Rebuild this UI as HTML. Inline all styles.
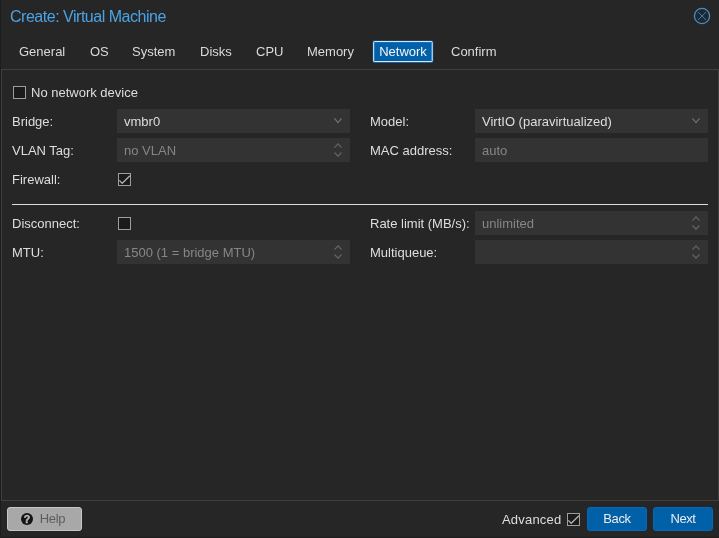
<!DOCTYPE html>
<html><head><meta charset="utf-8"><title>Create: Virtual Machine</title>
<style>
*{box-sizing:border-box;margin:0;padding:0}
html,body{width:719px;height:538px;overflow:hidden;background:#262626}
body{font-family:"Liberation Sans",Arial,Helvetica,sans-serif;font-size:13px;color:#dedede;position:relative}
.edgeL{position:absolute;left:0;top:0;width:1px;height:538px;background:#1c1c1c}
.edgeB{position:absolute;left:0;top:536px;width:719px;height:2px;background:linear-gradient(#252525,#1c1c1c)}
.title{position:absolute;left:10px;top:6px;transform:translateY(0.6px);font-size:16px;letter-spacing:-0.48px;color:#4ca3e4;line-height:20px;white-space:nowrap}
.close{position:absolute;left:693px;top:7px;width:18px;height:18px}
.tab{position:absolute;top:42px;height:22px;line-height:20px;font-size:13px;color:#dadada;white-space:nowrap}
.tab.act{top:41px;text-align:center;line-height:21px;color:#f6f6f6}
.panel{position:absolute;left:1px;top:69px;width:718px;height:432px;border:1px solid #3f3f3f;background:#262626}
.lbl{position:absolute;font-size:13px;line-height:16px;color:#dedede;white-space:nowrap}
.fld{position:absolute;height:24px;background:#333333;font-size:13px;line-height:26px;padding-left:7px;color:#dedede;white-space:nowrap;overflow:hidden}
.fld.dis{color:#868686}
.cb{position:absolute;width:13px;height:13px}
.hr{position:absolute;left:12px;top:204px;width:696px;height:1px;background:#dcdcdc}
.btn{position:absolute;top:507px;height:24px;border-radius:3px;font-size:13px;line-height:22px;text-align:center;letter-spacing:-0.4px;color:#ececec;background:#0060a8;border:1px solid #0668ba}
.help{background:#a8a8a8;color:#5e5e5e;border:1px solid #c6c6c6}
svg{position:absolute;overflow:visible}
.layer{position:absolute;left:0;top:0;width:719px;height:538px;will-change:transform;transform:translateZ(0)}
</style></head><body>
<div class="edgeL"></div><div class="edgeB"></div>
<div class="layer">
<div class="title">Create: Virtual Machine</div>
<svg class="close" viewBox="0 0 18 18"><circle cx="9" cy="9" r="7.6" fill="none" stroke="#3d8fd0" stroke-width="1.3"/><path d="M5 5L13 13M13 5L5 13" stroke="#2380d0" stroke-width="1" fill="none"/></svg>

<div class="tab" style="left:19px">General</div>
<div class="tab" style="left:90px">OS</div>
<div class="tab" style="left:132px">System</div>
<div class="tab" style="left:200px">Disks</div>
<div class="tab" style="left:256px">CPU</div>
<div class="tab" style="left:307px">Memory</div>
<svg style="left:370px;top:38px;width:66px;height:28px" viewBox="0 0 66 28"><rect x="2.6" y="2.5" width="60.7" height="22.2" rx="1" fill="#0a5ea6"/><rect x="3.7" y="3.6" width="58.5" height="20" rx=".6" fill="#0060aa" stroke="#eef4fa" stroke-width="1"/></svg>
<div class="tab act" style="left:373px;width:60px">Network</div>
<div class="tab" style="left:451px">Confirm</div>

<div class="panel"></div>

<svg class="cb" style="left:13px;top:86px" viewBox="0 0 13 13"><rect x=".5" y=".5" width="12" height="12" fill="#1b1b1b" stroke="#9e9e9e"/></svg>
<div class="lbl" style="left:31px;top:85px">No network device</div>

<div class="lbl" style="left:12px;top:114px">Bridge:</div>
<div class="fld" style="left:117px;top:109px;width:233px">vmbr0</div>
<svg style="left:334px;top:118px;width:8px;height:6px" viewBox="0 0 8 6"><path d="M.5 .4L4 4.5L7.5 .4" fill="none" stroke="#747474" stroke-width="1.15"/></svg>
<div class="lbl" style="left:12px;top:143px">VLAN Tag:</div>
<div class="fld dis" style="left:117px;top:138px;width:233px">no VLAN</div>
<svg style="left:334px;top:143px;width:8px;height:14px" viewBox="0 0 8 14"><path d="M.5 4.6L4 .9L7.5 4.6M.5 9.5L4 13.2L7.5 9.5" fill="none" stroke="#656565" stroke-width="1.2"/></svg>
<div class="lbl" style="left:12px;top:172px">Firewall:</div>
<svg class="cb" style="left:118px;top:173px" viewBox="0 0 13 13"><rect x=".5" y=".5" width="12" height="12" fill="#1b1b1b" stroke="#9e9e9e"/><path d="M1.3 7.4L4.2 10.3L11.9 2.7" fill="none" stroke="#b2b2b2" stroke-width="1.3"/></svg>

<div class="lbl" style="left:370px;top:114px">Model:</div>
<div class="fld" style="left:475px;top:109px;width:233px">VirtIO (paravirtualized)</div>
<svg style="left:692px;top:118px;width:8px;height:6px" viewBox="0 0 8 6"><path d="M.5 .4L4 4.5L7.5 .4" fill="none" stroke="#747474" stroke-width="1.15"/></svg>
<div class="lbl" style="left:370px;top:143px">MAC address:</div>
<div class="fld dis" style="left:475px;top:138px;width:233px">auto</div>

<div class="hr"></div>

<div class="lbl" style="left:12px;top:216px">Disconnect:</div>
<svg class="cb" style="left:118px;top:217px" viewBox="0 0 13 13"><rect x=".5" y=".5" width="12" height="12" fill="#1b1b1b" stroke="#9e9e9e"/></svg>
<div class="lbl" style="left:12px;top:245px">MTU:</div>
<div class="fld dis" style="left:117px;top:240px;width:233px">1500 (1 = bridge MTU)</div>
<svg style="left:334px;top:245px;width:8px;height:14px" viewBox="0 0 8 14"><path d="M.5 4.6L4 .9L7.5 4.6M.5 9.5L4 13.2L7.5 9.5" fill="none" stroke="#656565" stroke-width="1.2"/></svg>

<div class="lbl" style="left:370px;top:216px">Rate limit (MB/s):</div>
<div class="fld dis" style="left:475px;top:211px;width:233px">unlimited</div>
<svg style="left:692px;top:216px;width:8px;height:14px" viewBox="0 0 8 14"><path d="M.5 4.6L4 .9L7.5 4.6M.5 9.5L4 13.2L7.5 9.5" fill="none" stroke="#656565" stroke-width="1.2"/></svg>
<div class="lbl" style="left:370px;top:245px">Multiqueue:</div>
<div class="fld dis" style="left:475px;top:240px;width:233px"></div>
<svg style="left:692px;top:245px;width:8px;height:14px" viewBox="0 0 8 14"><path d="M.5 4.6L4 .9L7.5 4.6M.5 9.5L4 13.2L7.5 9.5" fill="none" stroke="#656565" stroke-width="1.2"/></svg>

<div class="btn help" style="left:7px;width:75px;padding-left:16px;letter-spacing:-0.3px">Help</div>
<svg style="left:21px;top:513px;width:12px;height:12px" viewBox="0 0 12 12"><circle cx="6" cy="6" r="6" fill="#141414"/><text x="6" y="9.6" font-family="Liberation Sans, sans-serif" font-weight="bold" font-size="10.5" text-anchor="middle" fill="#b6b6b6" stroke="#b6b6b6" stroke-width=".5">?</text></svg>
<div class="lbl" style="left:502px;top:512px;letter-spacing:0.2px">Advanced</div>
<svg class="cb" style="left:567px;top:513px" viewBox="0 0 13 13"><rect x=".5" y=".5" width="12" height="12" fill="#1b1b1b" stroke="#9e9e9e"/><path d="M1.3 7.4L4.2 10.3L11.9 2.7" fill="none" stroke="#b2b2b2" stroke-width="1.3"/></svg>
<div class="btn" style="left:587px;width:60px">Back</div>
<div class="btn" style="left:653px;width:60px">Next</div>
</div>
</body></html>
